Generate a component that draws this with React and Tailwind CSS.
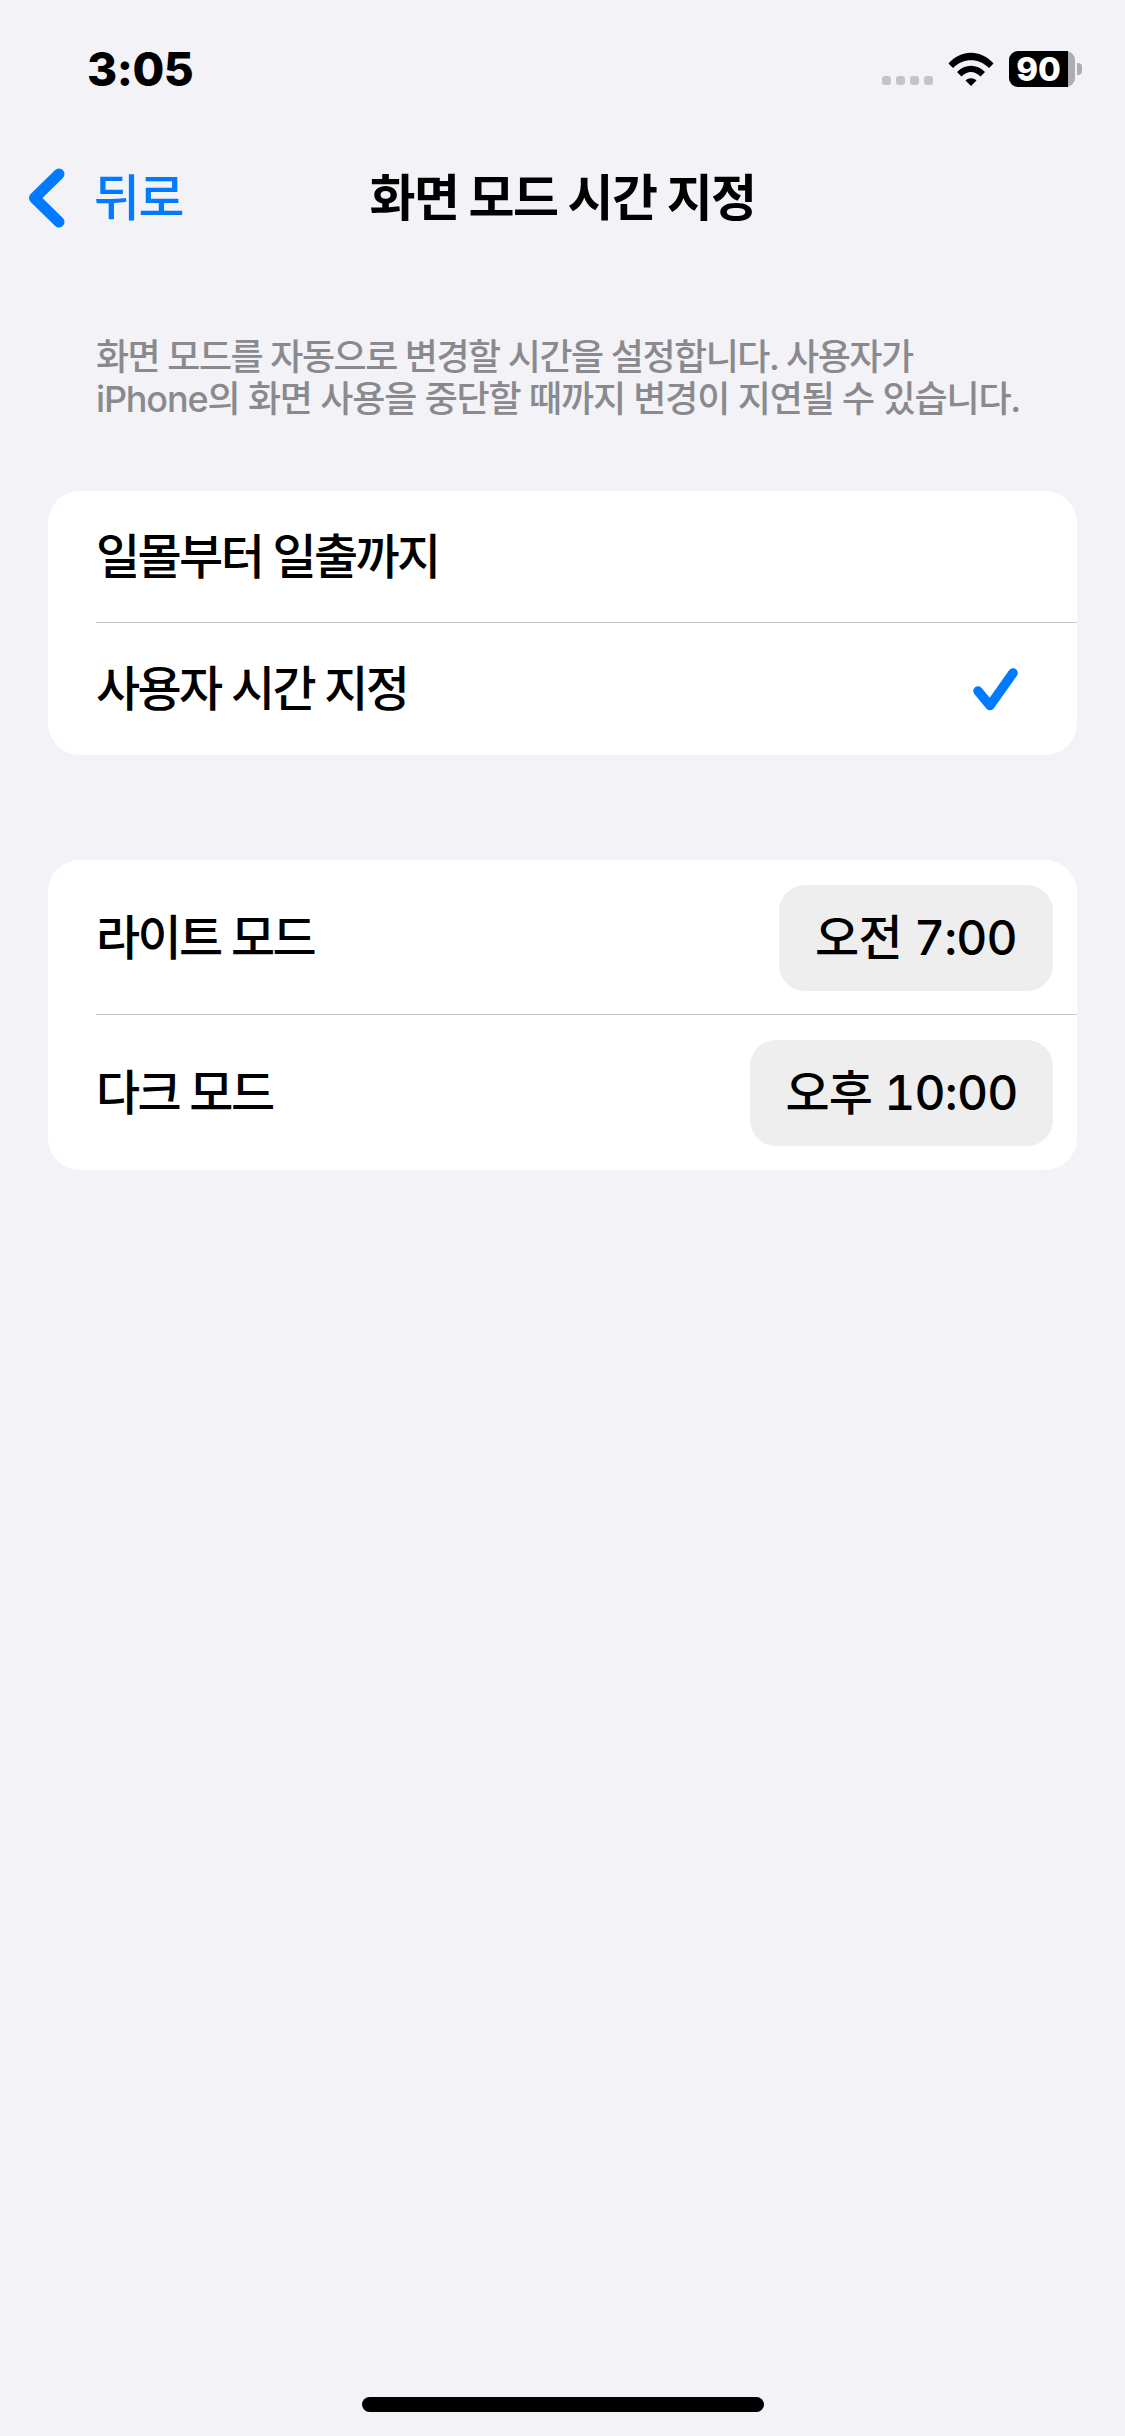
const KR = "font-['Inter','Noto_Sans_CJK_KR',sans-serif]";

function Row({ label, children, className = "" }) {
  return (
    <div className={`flex items-center justify-between ${className}`}>
      <span className="text-[48px] font-medium leading-none tracking-[-2.6px] text-black">{label}</span>
      {children}
    </div>
  );
}

function Pill({ children, className = "" }) {
  return (
    <div className={`flex h-[106px] items-center justify-center rounded-[26px] bg-[#eeeeef] text-[48px] font-medium leading-none tracking-[-0.8px] text-black tabular-nums ${className}`}>
      {children}
    </div>
  );
}

export default function App() {
  return (
    <div className={`flex h-[2436px] w-[1125px] flex-col overflow-hidden bg-[#f2f2f7] ${KR}`}>
      <div className="flex h-[143px] shrink-0 items-start justify-between pl-[87px] pr-[43px] pt-[44px]">
        <span className="text-[46px] font-extrabold leading-[50px] tracking-[-0.5px] text-black">3:05</span>
        <div className="flex items-start pt-[7px]">
          <div className="mr-[15px] mt-[25px] flex gap-[5px]">
            <i className="h-[9px] w-[9px] rounded-[3px] bg-[#c4c4c8]" />
            <i className="h-[9px] w-[9px] rounded-[3px] bg-[#c4c4c8]" />
            <i className="h-[9px] w-[9px] rounded-[3px] bg-[#c4c4c8]" />
            <i className="h-[9px] w-[9px] rounded-[3px] bg-[#c4c4c8]" />
          </div>
          <svg width="46" height="34" viewBox="0 0 46 34" className="mt-[1px]">
            <path d="M0.500 11.500C13 -3 33 -3 45.500 11.500L41 16C31 5.500 15 5.500 5 16Z" fill="#000" />
            <path d="M9 20C17 11.500 29 11.500 37 20L32.500 24.500C26.500 18.500 19.500 18.500 13.500 24.500Z" fill="#000" />
            <path d="M17.500 28.500C20.500 25.500 25.500 25.500 28.500 28.500L23 34Z" fill="#000" />
          </svg>
          <div className="ml-[15px] flex h-[36px] w-[66px] rounded-[9px] bg-[#aeaeb2]">
            <div className="flex h-full w-[59px] items-center justify-center rounded-l-[9px] bg-black text-[33px] font-extrabold leading-none text-white">90</div>
          </div>
          <div className="ml-[2px] mt-[12px] h-[12px] w-[5px] rounded-r-[4px] bg-[#aeaeb2]" />
        </div>
      </div>

      <div className="relative flex h-[110px] shrink-0 items-center pl-[28px]">
        <svg width="38" height="60" viewBox="0 0 38 60">
          <path d="M31 6L6.500 30L31 54" fill="none" stroke="#007aff" strokeWidth="11" strokeLinecap="round" strokeLinejoin="round" />
        </svg>
        <span className="ml-[28px] text-[50px] font-medium leading-none tracking-[-1.6px] text-[#007aff]">뒤로</span>
        <span className="absolute inset-x-0 text-center text-[50px] font-bold leading-none tracking-[-1.6px] text-black">화면 모드 시간 지정</span>
      </div>

      <p className="mx-[96px] mt-[83px] whitespace-nowrap text-[36px] font-medium leading-[42px] text-[#8a8a8e]">
        <span className="tracking-[-1.5px]">화면 모드를 자동으로 변경할 시간을 설정합니다. 사용자가</span>
        <br />
        <span className="tracking-[-1.15px]">iPhone의 화면 사용을 중단할 때까지 변경이 지연될 수 있습니다.</span>
      </p>

      <section className="mx-[48px] mt-[71px] overflow-hidden rounded-[32px] bg-white pl-[48px]">
        <Row label="일몰부터 일출까지" className="h-[131px]" />
        <div className="h-[1px] bg-[#c6c6c8]" />
        <Row label="사용자 시간 지정" className="h-[132px]">
          <svg width="45" height="43" viewBox="0 0 45 43" className="mr-[59px]">
            <path d="M5 23L17 37.500L40 5" fill="none" stroke="#007aff" strokeWidth="9.500" strokeLinecap="round" strokeLinejoin="round" />
          </svg>
        </Row>
      </section>

      <section className="mx-[48px] mt-[105px] overflow-hidden rounded-[32px] bg-white pl-[48px]">
        <Row label="라이트 모드" className="h-[154px] pr-[24px] pt-[2px]">
          <Pill className="w-[274px]">오전 7:00</Pill>
        </Row>
        <div className="h-[1px] bg-[#c6c6c8]" />
        <Row label="다크 모드" className="h-[155px] pr-[24px]">
          <Pill className="w-[303px]">오후 10:00</Pill>
        </Row>
      </section>

      <div className="mt-auto flex justify-center pb-[24px]">
        <div className="h-[15px] w-[402px] rounded-[8px] bg-black" />
      </div>
    </div>
  );
}
